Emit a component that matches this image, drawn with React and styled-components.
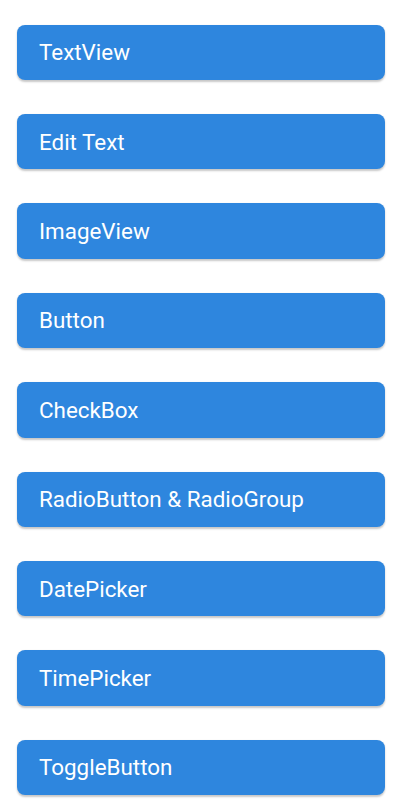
import React from "react";
import styled, { createGlobalStyle } from "styled-components";

const items = [
  "TextView",
  "Edit Text",
  "ImageView",
  "Button",
  "CheckBox",
  "RadioButton & RadioGroup",
  "DatePicker",
  "TimePicker",
  "ToggleButton",
];

export default function App() {
  return (
    <>
      <GlobalStyle />
      <List>
        {items.map((label) => (
          <MenuButton key={label}>{label}</MenuButton>
        ))}
      </List>
    </>
  );
}

const GlobalStyle = createGlobalStyle`
  body {
    margin: 0;
    background: #ffffff;
    font-family: Roboto, "Noto Sans", sans-serif;
  }
`;

const List = styled.div`
  display: flex;
  flex-direction: column;
  gap: 34px;
  padding: 24.6px 17px 0 16.5px;
  height: 800px;
  box-sizing: border-box;
  overflow: hidden;
`;

const MenuButton = styled.button`
  display: flex;
  align-items: center;
  height: 55.4px;
  flex-shrink: 0;
  padding: 0 0 0 22.5px;
  border: none;
  border-radius: 8px;
  background-color: #2e86de;
  color: #ffffff;
  font-family: Roboto, "Noto Sans", sans-serif;
  font-size: 22.4px;
  text-align: left;
  box-shadow: 0 1.5px 2px rgba(0, 0, 0, 0.22);
  cursor: pointer;
`;
